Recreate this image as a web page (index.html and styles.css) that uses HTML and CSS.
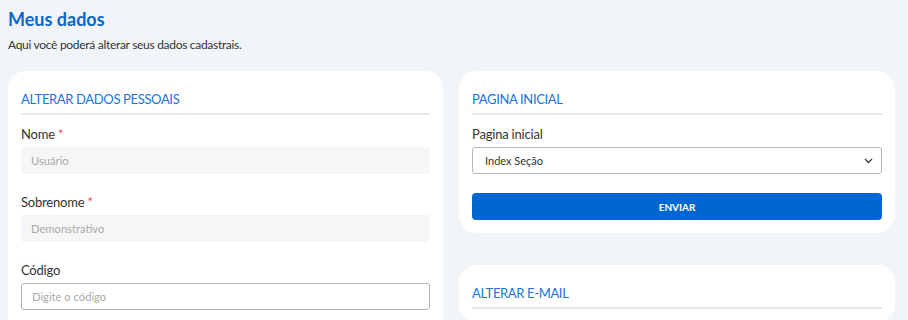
FILE: index.html
```html
<!DOCTYPE html>
<html lang="pt-BR">
<head>
<meta charset="utf-8">
<link rel="stylesheet" href="styles.css">
</head>
<body>
<div class="page">
  <h1 class="title">Meus dados</h1>
  <p class="subtitle">Aqui você poderá alterar seus dados cadastrais.</p>
  <div class="grid">
    <section class="card card-tall">
      <h2 class="card-title">ALTERAR DADOS PESSOAIS</h2>
      <div class="field">
        <label class="label">Nome <span class="req">*</span></label>
        <div class="input input-disabled">Usuário</div>
      </div>
      <div class="field">
        <label class="label">Sobrenome <span class="req">*</span></label>
        <div class="input input-disabled">Demonstrativo</div>
      </div>
      <div class="field">
        <label class="label">Código</label>
        <div class="input input-bordered">Digite o código</div>
      </div>
    </section>
    <div class="col">
      <section class="card">
        <h2 class="card-title">PAGINA INICIAL</h2>
        <div class="field">
          <label class="label">Pagina inicial</label>
          <div class="select">
            <span>Index Seção</span>
            <svg class="chev" width="9" height="6" viewBox="0 0 9 6"><path d="M1 1l3.5 3.5L8 1" fill="none" stroke="#444" stroke-width="1.4"/></svg>
          </div>
        </div>
        <button class="btn">ENVIAR</button>
      </section>
      <section class="card">
        <h2 class="card-title">ALTERAR E-MAIL</h2>
      </section>
    </div>
  </div>
</div>
</body>
</html>
```
FILE: styles.css
```css
* { box-sizing: border-box; }
html, body { margin: 0; padding: 0; }
body {
  background: #f2f5f8;
  font-family: "Lato", "Noto Sans", sans-serif;
  color: #333;
  overflow: hidden;
  height: 320px;
}
.page { padding: 7px 8px 0 8px; width: 902px; }
.title {
  margin: 0;
  font-size: 18px;
  font-weight: 700;
  color: #0a66cc;
  line-height: 24px;
}
.subtitle {
  margin: 2px 0 0 0;
  font-size: 12px;
  letter-spacing: -0.3px;
  line-height: 24px;
  color: #333;
}
.grid {
  margin-top: 14px;
  display: grid;
  grid-template-columns: 435px 436px;
  gap: 16px;
  align-items: start;
}
.col { display: flex; flex-direction: column; gap: 32px; }
.card {
  background: #fff;
  border-radius: 18px;
  padding: 18px 13px 13px 13px;
}
.card-tall { min-height: 400px; }
.card-title {
  margin: 0;
  font-size: 13px;
  letter-spacing: -0.35px;
  font-weight: 400;
  color: #1a73d9;
  line-height: 20px;
  padding-bottom: 4px;
  border-bottom: 2px solid #e8e9eb;
}
.field { margin-top: 10px; margin-bottom: 19px; }
.label {
  display: block;
  font-size: 13px;
  letter-spacing: -0.2px;
  line-height: 18px;
  color: #333;
  margin-bottom: 4px;
}
.req { color: #e14b4b; }
.input {
  height: 27px;
  border-radius: 3px;
  padding: 0 10px;
  font-size: 11.2px;
  line-height: 27px;
  color: #aaa;
}
.input-disabled { background: #f6f6f6; }
.input-bordered { border: 1px solid #b3b3b3; line-height: 25px; }
.select {
  height: 27px;
  border: 1px solid #b8b8b8;
  border-radius: 3px;
  padding: 0 8px 0 12px;
  display: flex;
  align-items: center;
  justify-content: space-between;
  font-size: 11px;
  color: #333;
}
.btn {
  display: block;
  width: 100%;
  height: 27px;
  margin-top: 5px;
  border: none;
  border-radius: 4px;
  background: #0066d2;
  color: #fff;
  font-family: inherit;
  font-weight: 700;
  font-size: 10px;
}
```
